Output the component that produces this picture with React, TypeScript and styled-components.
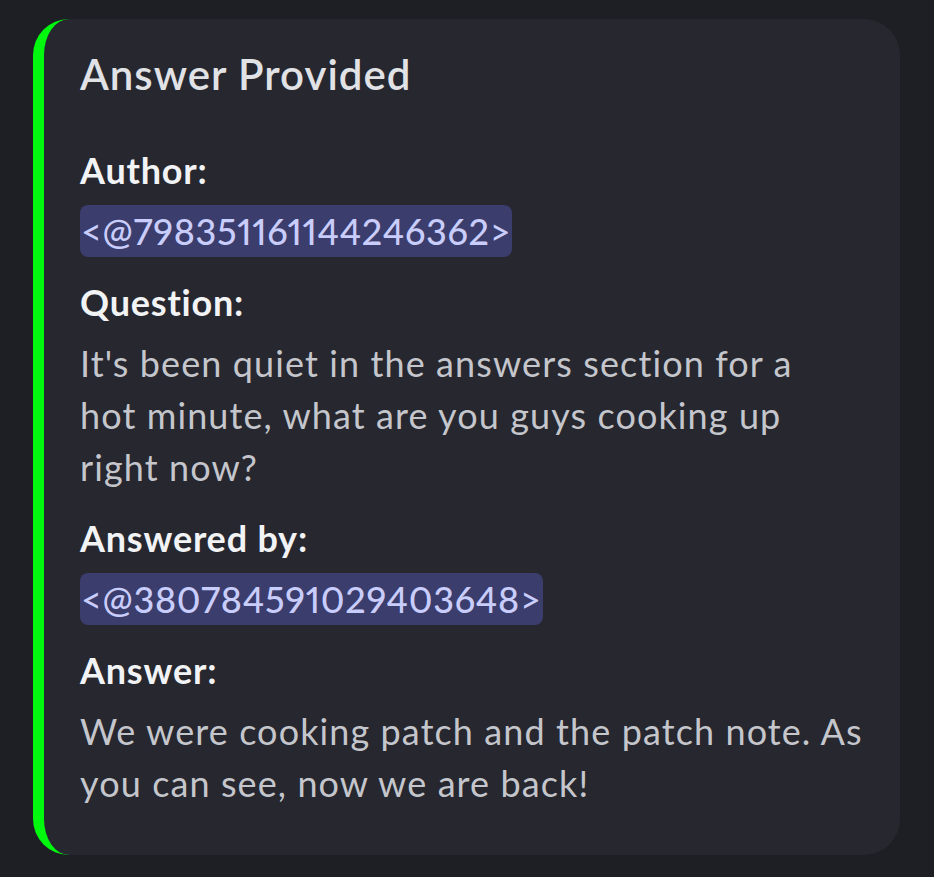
import React from 'react'
import styled, { createGlobalStyle } from 'styled-components'

const GlobalStyle = createGlobalStyle`
  html, body {
    margin: 0;
    padding: 0;
    background: #1e1f24;
  }
  body {
    font-family: Lato, "Noto Sans", "Liberation Sans", sans-serif;
    -webkit-font-smoothing: antialiased;
  }
`

const Page = styled.div`
  width: 934px;
  height: 877px;
  box-sizing: border-box;
  padding: 19px 34px 22px 33px;
  background: #1e1f24;
`

const Embed = styled.div<{ accent: string }>`
  box-sizing: border-box;
  height: 836px;
  background: #26272f;
  border-left: 11px solid ${({ accent }) => accent};
  border-radius: 36px;
  padding: 29px 36px 44px 36px;
`

const Title = styled.div`
  font-size: 42px;
  line-height: 52px;
  font-weight: 600;
  letter-spacing: 1px;
  color: #e1e2e6;
  margin-bottom: 44px;
`

const Fields = styled.div`
  display: flex;
  flex-direction: column;
  gap: 19px;
`

const Field = styled.div`
  display: flex;
  flex-direction: column;
  gap: 9px;
`

const FieldName = styled.div`
  font-size: 36px;
  line-height: 52px;
  font-weight: 700;
  letter-spacing: 0.8px;
  color: #f2f3f5;
`

const FieldValue = styled.div`
  font-size: 36px;
  line-height: 52px;
  font-weight: 400;
  letter-spacing: 1.1px;
  color: #c4c6cc;
  white-space: pre-line;
`

const Mention = styled.span`
  display: inline-block;
  padding: 0 1px;
  border-radius: 8px;
  background: #3b3d6c;
  color: #c9cdfb;
  font-weight: 500;
  letter-spacing: 0.7px;
  font-variant-numeric: proportional-nums;
`

type FieldData = { name: string; value: string; mention?: boolean }

const fields: FieldData[] = [
  { name: 'Author:', value: '<@798351161144246362>', mention: true },
  {
    name: 'Question:',
    value: "It's been quiet in the answers section for a\nhot minute, what are you guys cooking up right now?",
  },
  { name: 'Answered by:', value: '<@380784591029403648>', mention: true },
  {
    name: 'Answer:',
    value: 'We were cooking patch and the patch note. As you can see, now we are back!',
  },
]

const App: React.FC = () => (
  <>
    <GlobalStyle />
    <Page>
      <Embed accent="#00f80e">
        <Title>Answer Provided</Title>
        <Fields>
          {fields.map((field) => (
            <Field key={field.name}>
              <FieldName>{field.name}</FieldName>
              <FieldValue>{field.mention ? <Mention>{field.value}</Mention> : field.value}</FieldValue>
            </Field>
          ))}
        </Fields>
      </Embed>
    </Page>
  </>
)

export default App
